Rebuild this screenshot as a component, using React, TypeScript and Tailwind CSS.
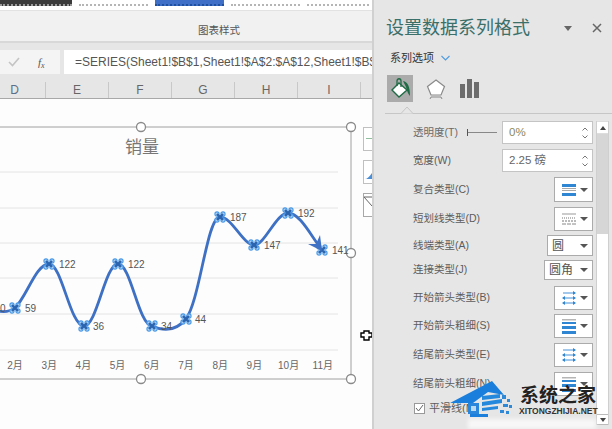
import React from 'react';

const font = "font-['Liberation_Sans','Noto_Sans_CJK_SC',sans-serif]";

const points = [
  { x: 15, y: 308, label: '59', lx: 25 },
  { x: 49, y: 264, label: '122', lx: 59 },
  { x: 84, y: 326, label: '36', lx: 93 },
  { x: 118, y: 264, label: '122', lx: 128 },
  { x: 152, y: 326, label: '34', lx: 161 },
  { x: 186, y: 319, label: '44', lx: 195 },
  { x: 220, y: 217, label: '187', lx: 230 },
  { x: 254, y: 245, label: '147', lx: 264 },
  { x: 288, y: 213, label: '192', lx: 298 },
  { x: 322, y: 250, label: '141', lx: 332 },
];

const months = ['2月', '3月', '4月', '5月', '6月', '7月', '8月', '9月', '10月', '11月'];
const columns = ['E', 'F', 'G', 'H', 'I'];

type Glyph = 'compound' | 'dash' | 'arrow' | 'weight';

function Marker({ x, y }: { x: number; y: number }) {
  return (
    <g>
      {[[-3, -3], [3, -3], [-3, 3], [3, 3]].map(([dx, dy]) => (
        <circle key={`${dx}${dy}`} cx={x + dx} cy={y + dy} r="2.1" fill="#a9d0f5" stroke="#4a9ae8" strokeWidth="1.1" />
      ))}
      <path d={`M${x - 3} ${y - 3}L${x + 3} ${y + 3}M${x + 3} ${y - 3}L${x - 3} ${y + 3}`} stroke="#2c64ad" strokeWidth="2.4" />
    </g>
  );
}

function Handle({ x, y }: { x: number; y: number }) {
  return <circle cx={x} cy={y} r="4.5" fill="#fff" stroke="#8a8a8a" strokeWidth="1.3" />;
}

// the line chart is drawn in page coordinates, offset by the chart area origin
function Chart() {
  return (
    <svg viewBox="0 0 372 429" className="w-full h-full">
      {[172, 208, 243, 278, 314, 350].map((y) => (
        <line key={y} x1="0" x2="338" y1={y} y2={y} stroke="#e4e4e4" strokeWidth="1" />
      ))}
      <path d="M0 127H351V379H0" fill="none" stroke="#a0a0a0" strokeWidth="1" />
      <path
        d="M-5 311C5 312 10 312 15 308C27 296 36 264 49 264C62 264 70 326 84 326C97 326 105 264 118 264C131 264 138 324 152 326C165 332 176 331 186 319C200 300 207 217 220 217C232 217 243 245 254 245C265 245 276 213 288 213C300 213 311 236 320 247"
        fill="none"
        stroke="#3e70c4"
        strokeWidth="2.8"
      />
      {points.map((p) => <Marker key={p.x} x={p.x} y={p.y} />)}
      <path d="M308 244L322 251L320 235L316 244Z" fill="#3e70c4" />
      <Handle x={141} y={127} />
      <Handle x={351} y={127} />
      <Handle x={351} y={253} />
      <Handle x={141} y={379} />
      <Handle x={351} y={379} />
      <path d="M361 333h3v-2h5v2h3v4h-3v3h-5v-3h-3z" fill="#fff" stroke="#000" strokeWidth="1.4" />
    </svg>
  );
}

function LineGlyph({ kind }: { kind: Glyph }) {
  if (kind === 'compound') {
    return (
      <svg width="14" height="12" viewBox="0 0 14 12">
        <rect y="0" width="14" height="3" fill="#2f86d2" />
        <rect y="4" width="14" height="1" fill="#a8a8a8" />
        <rect y="6" width="14" height="1" fill="#a8a8a8" />
        <rect y="9" width="14" height="3" fill="#2f86d2" />
      </svg>
    );
  }
  if (kind === 'dash') {
    return (
      <svg width="14" height="12" viewBox="0 0 14 12">
        <path d="M0 1H14" stroke="#999" />
        <path d="M0 5H14" stroke="#777" strokeDasharray="1 1" />
        <path d="M0 8H14" stroke="#777" strokeDasharray="2 1" />
        <path d="M0 11H14" stroke="#888" strokeDasharray="4 1" />
      </svg>
    );
  }
  if (kind === 'arrow') {
    return (
      <svg width="14" height="14" viewBox="0 0 14 14">
        <path d="M1 2H13M1 7H13M1 12H13" stroke="#2f86d2" strokeWidth="0.9" />
        <path d="M14 2l-3 -2v4zM0 7l3 -2v4zM14 7l-3 -2v4zM0 12l3 -2v4zM14 12l-3 -2v4z" fill="#2f86d2" />
      </svg>
    );
  }
  return (
    <svg width="14" height="15" viewBox="0 0 14 15">
      <rect y="0" width="14" height="1.5" fill="#b5b5b5" />
      <rect y="3" width="14" height="2" fill="#2f86d2" />
      <rect y="7" width="14" height="3" fill="#2f86d2" />
      <rect y="12" width="14" height="3" fill="#2f86d2" />
    </svg>
  );
}

function Caret() {
  return <span className="w-0 h-0 border-x-[4px] border-x-transparent border-t-[4px] border-t-[#555]" />;
}

function Row({ label, className, children }: { label: string; className: string; children: React.ReactNode }) {
  return (
    <div className={`flex items-center justify-between ${className}`}>
      <span className="text-[10.5px] text-[#5c5c5c] whitespace-nowrap">{label}</span>
      {children}
    </div>
  );
}

function GlyphSelect({ kind, h = 'h-[24px]' }: { kind: Glyph; h?: string }) {
  return (
    <div className={`w-[39px] ${h} bg-white border border-[#ababab] flex items-center justify-between pl-[7px] pr-[4px] shrink-0`}>
      <LineGlyph kind={kind} />
      <Caret />
    </div>
  );
}

function TextSelect({ value, w, h }: { value: string; w: string; h: string }) {
  return (
    <div className={`${w} ${h} bg-white border border-[#ababab] flex items-center justify-between pl-[4px] pr-[4px] shrink-0`}>
      <span className="text-[12px] text-[#555]">{value}</span>
      <Caret />
    </div>
  );
}

function Spinner({ value, color }: { value: string; color: string }) {
  return (
    <div className="w-[91px] h-[23px] bg-white border border-[#c4c4c4] flex items-center justify-between pl-[6px] pr-[4px] shrink-0">
      <span className={`text-[11.5px] ${color}`}>{value}</span>
      <span className="flex flex-col gap-[4px] text-[#777]">
        <svg width="6" height="4" viewBox="0 0 6 4"><path d="M0.5 3.5L3 1L5.5 3.5" fill="none" stroke="currentColor" /></svg>
        <svg width="6" height="4" viewBox="0 0 6 4"><path d="M0.5 0.5L3 3L5.5 0.5" fill="none" stroke="currentColor" /></svg>
      </span>
    </div>
  );
}

function Ribbon() {
  const thumbs = [
    'w-[72px] bg-[#3b3b3b] border-[#9a9a9a]',
    'w-[69px] bg-white border-[#b5b5b5]',
    'w-[69px] bg-[#3f6fc6] border-[#1f4f9f]',
    'w-[69px] bg-white border-[#b5b5b5]',
    'w-[62px] bg-white border-[#b5b5b5]',
  ];
  return (
    <div className="h-[43px] bg-[#f1f1f1] relative">
      <div className="h-[11px] bg-white flex gap-[7px] items-start border-b border-[#e2e2e2]">
        {thumbs.map((t) => (
          <div key={t} className={`${t} h-[6px] border-b-2 border-dotted shrink-0`} />
        ))}
      </div>
      <div className="text-center text-[10.5px] text-[#555] pt-[12px] pl-[66px]">图表样式</div>
      <div className="absolute inset-x-0 bottom-0 h-[2px] bg-[#d8d8d8]" />
    </div>
  );
}

function FormulaBar() {
  return (
    <div className="h-[31px] bg-[#e6e6e6] flex items-start gap-[4px] pt-[7px]">
      <div className="w-[60px] h-[24px] bg-[#f4f4f4] flex items-center pl-[8px] gap-[18px] shrink-0">
        <svg width="12" height="10" viewBox="0 0 12 10"><path d="M1 5L4.5 8.5L11 1" fill="none" stroke="#c4c4c4" strokeWidth="1.6" /></svg>
        <span className="text-[11px] italic text-[#555] font-['Liberation_Serif',serif]">f<sub className="text-[8px]">x</sub></span>
      </div>
      <div className="flex-1 h-[24px] bg-white flex items-center pl-[11px] overflow-hidden">
        <span className="text-[12px] text-[#555] whitespace-nowrap">=SERIES(Sheet1!$B$1,Sheet1!$A$2:$A$12,Sheet1!$B$2:$</span>
      </div>
    </div>
  );
}

function ColumnHeader() {
  return (
    <div className="h-[25px] bg-[#e6e6e6] border-b border-[#a8a8a8] flex items-end">
      <div className="w-[46px] h-[16px] border-r border-[#c8c8c8] flex items-center justify-end pr-[26px] text-[12px] text-[#5b6f8a] shrink-0">
        D
      </div>
      {columns.map((c) => (
        <div key={c} className="w-[63px] h-[16px] border-r border-[#c8c8c8] flex items-center justify-center text-[12px] text-[#666] shrink-0">
          {c}
        </div>
      ))}
    </div>
  );
}

function ChartArea() {
  return (
    <div className="flex-1 bg-[#fdfdfd] relative overflow-hidden">
      <div className="absolute left-0 top-[-99px] w-[372px] h-[429px]">
        <Chart />
      </div>
      <div className="absolute left-[125px] top-[36px] text-[17px] text-[#777]">销量</div>
      {points.map((p) => (
        <span key={p.x} className="absolute text-[10px] text-[#555]" style={{ left: p.lx, top: p.y - 106 }}>
          {p.label}
        </span>
      ))}
      <span className="absolute left-0 top-[202px] text-[10px] text-[#555]">0</span>
      {months.map((m, i) => (
        <span key={m} className="absolute text-[10px] text-[#666] -translate-x-1/2 top-[259px]" style={{ left: 15 + i * 34.2 }}>
          {m}
        </span>
      ))}
      {/* chart side buttons */}
      <div className="absolute left-[363px] top-[28px] w-[9px] h-[24px] bg-white border border-[#c0c0c0] border-r-0">
        <span className="absolute left-[2px] top-[10px] w-[7px] h-px bg-[#8fbf9f]" />
      </div>
      <div className="absolute left-[363px] top-[61px] w-[9px] h-[24px] bg-white border border-[#c0c0c0] border-r-0 overflow-hidden">
        <svg width="9" height="22" viewBox="0 0 9 22"><path d="M1 18C3 18 5 16 8 12V18Z" fill="#4a90d8" /></svg>
      </div>
      <div className="absolute left-[363px] top-[94px] w-[9px] h-[24px] bg-white border border-[#a8a8a8] border-r-0 overflow-hidden">
        <svg width="9" height="22" viewBox="0 0 9 22"><path d="M0 3H8M0 3L8 12" stroke="#666" fill="none" /></svg>
      </div>
    </div>
  );
}

function PaneTabs() {
  return (
    <div className="flex items-center pl-[13px] h-[27px] mt-[5px] shrink-0">
      <div className="w-[26px] h-[27px] bg-[#ababab] flex items-center justify-center">
        <svg width="22" height="23" viewBox="0 0 22 23">
          <path d="M10 6L18 13L10 20L3 13Z" fill="#fff" stroke="#1f6b45" strokeWidth="1.4" />
          <path d="M8 9V4C8 1 12 1 12 4V10" fill="none" stroke="#1f6b45" strokeWidth="1.3" />
          <path d="M14 4C19 5 21 10 21 19C19 17 18 14 17 10Z" fill="#1f6b45" />
        </svg>
      </div>
      <svg width="20" height="22" viewBox="0 0 20 22" className="ml-[13px]">
        <path d="M10 2L18.5 8.5L15 17H5L1.5 8.5Z" fill="#fff" stroke="#8a8a8a" strokeWidth="1.2" />
        <path d="M5 19H15M5 19L4 21M15 19L16 21" stroke="#8a8a8a" fill="none" />
      </svg>
      <svg width="19" height="19" viewBox="0 0 19 19" className="ml-[14px]">
        <rect x="0" y="5" width="5" height="14" fill="#6d6d6d" />
        <rect x="7" y="0" width="5" height="19" fill="#6d6d6d" />
        <rect x="14" y="3" width="5" height="16" fill="#6d6d6d" />
      </svg>
    </div>
  );
}

function Scrollbar() {
  return (
    <div className="w-[13px] shrink-0 flex flex-col bg-white border-x border-[#cfcfcf]">
      <div className="h-[13px] bg-white flex items-center justify-center border-y border-[#ddd]">
        <span className="w-0 h-0 border-x-[3.5px] border-x-transparent border-b-[4px] border-b-[#444]" />
      </div>
      <div className="h-[100px] bg-[#d6d6d6]" />
      <div className="flex-1 bg-white" />
      <div className="h-[11px] bg-white flex items-center justify-center border-y border-[#bbb]">
        <span className="w-0 h-0 border-x-[3.5px] border-x-transparent border-t-[4px] border-t-[#444]" />
      </div>
    </div>
  );
}

function FormatPane() {
  return (
    <aside className="w-[240px] bg-[#e6e6e6] border-l-2 border-[#d0d0d0] shrink-0 flex flex-col">
      <div className="flex items-center h-[40px] pt-[16px] pl-[12px] pr-[8px] shrink-0">
        <span className="text-[18px] text-[#3a6f6a] flex-1 whitespace-nowrap">设置数据系列格式</span>
        <span className="w-0 h-0 border-x-[4px] border-x-transparent border-t-[5px] border-t-[#666] mr-[20px]" />
        <svg width="10" height="10" viewBox="0 0 10 10" className="mr-[2px]"><path d="M1 1L9 9M9 1L1 9" stroke="#666" strokeWidth="1.5" /></svg>
      </div>
      <div className="flex items-center gap-[7px] pl-[16px] h-[30px] pt-[6px] shrink-0">
        <span className="text-[11px] text-[#333]">系列选项</span>
        <svg width="9" height="6" viewBox="0 0 9 6"><path d="M0.5 1L4.5 5L8.5 1" fill="none" stroke="#4f9be0" strokeWidth="1.1" /></svg>
      </div>
      <PaneTabs />
      <div className="relative h-[13px] ml-[11px] mr-0 shrink-0">
        <div className="absolute inset-x-0 bottom-[1px] h-px bg-[#c6c6c6]" />
        <svg width="12" height="8" viewBox="0 0 12 8" className="absolute left-[16px] bottom-[1px]"><path d="M0 7.5L6 1L12 7.5" fill="#e6e6e6" stroke="#c6c6c6" /></svg>
      </div>
      <div className="flex flex-1 min-h-0 mt-[6px] pb-[4px]">
        <div className="w-[219px] shrink-0 pl-[39px]">
          <div className="flex items-center h-[23px] justify-between">
            <span className="flex items-center gap-[9px] text-[10.5px] text-[#6a6a6a] whitespace-nowrap">
              透明度(T)
              <span className="flex items-center w-[30px]">
                <span className="w-px h-[7px] bg-[#555]" />
                <span className="flex-1 h-px bg-[#888]" />
              </span>
            </span>
            <Spinner value="0%" color="text-[#8a8a60]" />
          </div>
          <Row label="宽度(W)" className="h-[23px] mt-[5px]"><Spinner value="2.25 磅" color="text-[#666]" /></Row>
          <Row label="复合类型(C)" className="h-[25px] mt-[5px]"><GlyphSelect kind="compound" h="h-[25px]" /></Row>
          <Row label="短划线类型(D)" className="h-[24px] mt-[5px]"><GlyphSelect kind="dash" /></Row>
          <Row label="线端类型(A)" className="h-[21px] mt-[4px]"><TextSelect value="圆" w="w-[46px]" h="h-[21px]" /></Row>
          <Row label="连接类型(J)" className="h-[20px] mt-[4px]"><TextSelect value="圆角" w="w-[49px]" h="h-[20px]" /></Row>
          <Row label="开始箭头类型(B)" className="h-[24px] mt-[6px]"><GlyphSelect kind="arrow" /></Row>
          <Row label="开始箭头粗细(S)" className="h-[24px] mt-[4px]"><GlyphSelect kind="weight" /></Row>
          <Row label="结尾箭头类型(E)" className="h-[24px] mt-[5px]"><GlyphSelect kind="arrow" /></Row>
          <Row label="结尾箭头粗细(N)" className="h-[24px] mt-[5px]"><GlyphSelect kind="weight" /></Row>
          <div className="flex items-center gap-[4px] h-[12px] mt-[6px] ml-px">
            <span className="w-[11px] h-[11px] bg-white border border-[#999] flex items-center justify-center">
              <svg width="9" height="8" viewBox="0 0 9 8"><path d="M1 4L3.5 7L8 1" fill="none" stroke="#666" strokeWidth="1" /></svg>
            </span>
            <span className="text-[11px] text-[#5c5c5c]">平滑线(M)</span>
          </div>
        </div>
        <div className="w-[3px] shrink-0" />
        <Scrollbar />
      </div>
    </aside>
  );
}

function Watermark() {
  return (
    <div className="absolute left-[450px] top-[380px] w-[162px] h-[49px]">
      <div className="absolute left-[18px] top-[39px] w-[128px] h-[10px] bg-white/70 blur-[2px]" />
      <svg width="66" height="49" viewBox="0 0 66 49" className="absolute left-0 top-0">
        <path d="M0 23L42 1L54 15L38 12L23 23Z" fill="#1a7fdc" />
        <path d="M18 23H29V34H18Z" fill="#2a86da" />
        <path d="M21 26H26V31H21Z" fill="#bcd9f2" />
        <path d="M20 34H38V37H20Z" fill="#1a7fdc" />
        <path d="M32 16L50 14V18L32 20ZM32 22L52 19V23L32 26ZM32 28L48 26V29L32 31Z" fill="#2488dc" />
        <path d="M52 15h4v4h-4zM57 19h3v3h-3zM53 24h5v3h-5zM59 25h3v3h-3zM50 30h4v3h-4zM56 31h3v3h-3z" fill="#2e8ad8" />
      </svg>
      <span className="absolute left-[70px] top-[3px] text-[19px] leading-[26px] font-bold text-[#222] whitespace-nowrap">系统之家</span>
      <span className="absolute left-[69px] top-[26px] text-[8.5px] leading-[11px] font-bold text-[#333] whitespace-nowrap">XITONGZHIJIA.NET</span>
    </div>
  );
}

export default function App() {
  return (
    <div className={`${font} relative w-[612px] h-[429px] overflow-hidden flex bg-[#e6e6e6]`}>
      <main className="w-[372px] shrink-0 flex flex-col">
        <Ribbon />
        <FormulaBar />
        <ColumnHeader />
        <ChartArea />
      </main>
      <FormatPane />
      <Watermark />
    </div>
  );
}
